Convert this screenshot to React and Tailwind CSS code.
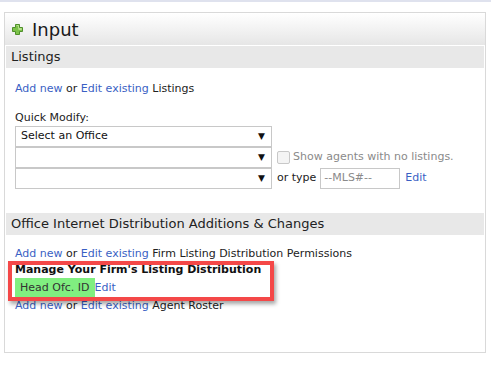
const font = { fontFamily: '"DejaVu Sans", Verdana, sans-serif' };

function PlusIcon() {
  return (
    <svg width="11" height="11" viewBox="0 0 11 11" className="shrink-0">
      <path
        d="M3.5 0.5h4v3h3v4h-3v3h-4v-3h-3v-4h3z"
        fill="#7cc24a"
        stroke="#4f8f2a"
        strokeWidth="1"
      />
      <path d="M4.5 1.5h2v3h3v1h-3" fill="none" stroke="#b5e08a" strokeWidth="1" />
    </svg>
  );
}

function LinkLine({ children }) {
  return (
    <div className="text-[11px] leading-[16px] text-[#222]">
      <a className="text-[#3a5fc4]">Add new</a> or{' '}
      <a className="text-[#3a5fc4]">Edit existing</a> {children}
    </div>
  );
}

function Select({ label }) {
  return (
    <div className="flex h-[21px] w-[257px] items-center justify-between border border-[#c8c8c8] bg-white pl-[5px] pr-[6px] text-[11px] text-[#111]">
      <span>{label}</span>
      <span className="text-[9px] leading-none">▼</span>
    </div>
  );
}

function SectionHeader({ children }) {
  return (
    <div className="mx-[1px] flex h-[22px] items-center bg-[#e8e8e8] pl-[5px] text-[13px] text-[#222]">
      {children}
    </div>
  );
}

export default function App() {
  return (
    <div className="relative h-[365px] w-[491px] overflow-hidden border-t-2 border-[#dfe2ee] bg-white" style={font}>
      <div className="ml-[4px] mt-[10px] h-[341px] w-[482px] border border-[#d9d9d9]">
        <div className="flex h-[33px] items-center gap-[9px] border-b border-white bg-gradient-to-b from-[#ffffff] to-[#e6e6e6] pl-[7px] pt-[1px] text-[18px] text-[#1a1a1a]">
          <PlusIcon />
          <span>Input</span>
        </div>
        <SectionHeader>Listings</SectionHeader>

        <div className="pl-[10px]">
          <div className="mt-[13px]">
            <LinkLine>Listings</LinkLine>
          </div>
          <div className="mt-[14px] text-[11px] leading-[14px] text-[#222]">Quick Modify:</div>
          <div className="mt-[1px] flex">
            <div className="flex flex-col">
              <Select label="Select an Office" />
              <Select label="" />
              <Select label="" />
            </div>
            <div className="flex flex-col pl-[5px] pt-[21px] text-[11px]">
              <div className="flex h-[21px] items-center gap-[3px] text-[#8a8a8a]">
                <span className="h-[13px] w-[13px] rounded-[2px] border border-[#c8c8c8] bg-[#f4f4f4]" />
                <span>Show agents with no listings.</span>
              </div>
              <div className="flex h-[21px] items-center text-[#222]">
                <span>or type</span>
                <div className="ml-[4px] flex h-[21px] w-[80px] items-center border border-[#c8c8c8] pl-[3px] text-[#8a8a8a]">
                  --MLS#--
                </div>
                <a className="ml-[5px] text-[#3a5fc4]">Edit</a>
              </div>
            </div>
          </div>
        </div>

        <div className="mt-[24px]">
          <SectionHeader>Office Internet Distribution Additions &amp; Changes</SectionHeader>
        </div>
        <div className="pl-[10px]">
          <div className="mt-[11px]">
            <LinkLine>Firm Listing Distribution Permissions</LinkLine>
          </div>
          <div className="text-[11px] font-bold leading-[16px] text-[#111]">
            Manage Your Firm's Listing Distribution
          </div>
          <div className="flex h-[20px] items-center text-[11px]">
            <span className="flex h-[20px] items-center bg-[#80ef80] px-[5px] text-[#333]">Head Ofc. ID</span>
            <a className="text-[#3a5fc4]">Edit</a>
          </div>
          <LinkLine>Agent Roster</LinkLine>
        </div>
      </div>

      <div className="absolute left-[8px] top-[259px] h-[40px] w-[266px] border-4 border-[#f44848] shadow-[2px_3px_4px_rgba(0,0,0,0.35)]" />
    </div>
  );
}
